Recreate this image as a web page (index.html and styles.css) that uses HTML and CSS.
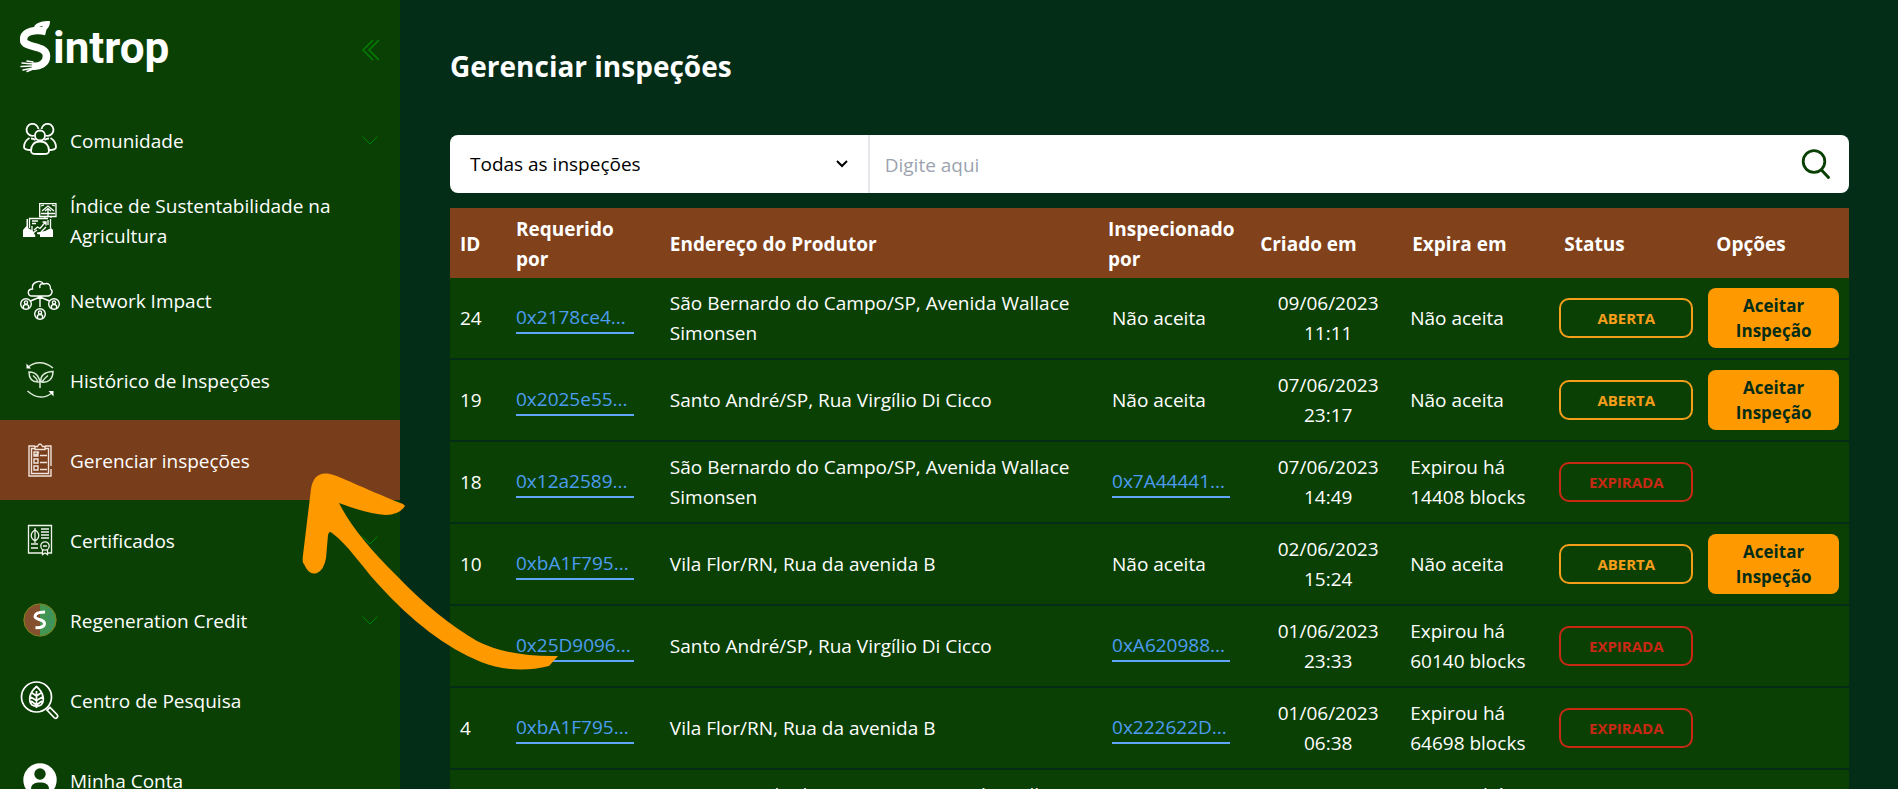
FILE: index.html
```html
<!DOCTYPE html>
<html lang="pt-BR">
<head>
<meta charset="utf-8">
<title>Sintrop – Gerenciar inspeções</title>
<link rel="stylesheet" href="styles.css">
</head>
<body>
<div class="shell">
  <aside class="sidebar">
    <div class="brand">
      <a class="logo" href="#" aria-label="Sintrop">
        <svg class="logo-mark" viewBox="0 0 32 52" width="32" height="52" aria-hidden="true">
          <path d="M26 10.500C16 8 3.500 10 3.500 18.500C3.500 28 26.500 23 26.500 35C26.500 43 19 46 12 45" fill="none" stroke="#fff" stroke-width="7.500"/>
          <path d="M14 6C16 1 23 0 30 0C30 7 26 11 18 10L23 5C20 5 17 8 14 6Z" fill="#fff"/>
          <path d="M13 41L7 40M13 43L2 42M13 45L1 45.500M13 47L3 49M13 48L7 50.500" stroke="#fff" stroke-width="1.500" stroke-linecap="round"/>
        </svg>
        <span class="logo-text">introp</span>
      </a>
      <button class="collapse" type="button" aria-label="Recolher menu">
        <svg viewBox="0 0 18 22" width="18" height="22"><path d="M11 1L1 11L11 21M17 1L7 11L17 21" fill="none" stroke="currentColor" stroke-width="1.500"/></svg>
      </button>
    </div>
    <nav class="menu">
      <a class="item" href="#">
        <svg class="icon" viewBox="0 0 40 40"><g fill="none" stroke="#fff" stroke-width="1.800" stroke-linejoin="round"><circle cx="20" cy="15.500" r="5"/><path d="M11 31C11 25 14 21.500 20 21.500S29 25 29 31C29 34 27 34 20 34S11 34 11 31Z"/><path d="M14.500 15.500A6 6 0 1 1 18.500 9M25.500 15.500A6 6 0 1 0 21.500 9M9.500 18C6 20 4 23 4 27C4 29.500 6 30 11 30M30.500 18C34 20 36 23 36 27C36 29.500 34 30 29 30M11 18.500C13 18.500 14 19 15.500 20M29 18.500C27 18.500 26 19 24.500 20"/></g></svg>
        <span class="label">Comunidade</span>
        <svg class="chevron" viewBox="0 0 16 9"><path d="M.500 .500L8 8L15.500 .500"/></svg>
      </a>
      <a class="item" href="#">
        <svg class="icon" viewBox="0 0 40 40"><g fill="none" stroke="#fff" stroke-width="1.300"><path d="M19.700 3.700H36V16.500H19.700ZM22 11L28 6L34 11M25 11L28 8.500L31 11M28 9V16M21 13.500H35M21 6L24 5M35 6L32 5M25 16V18M31 16V18M9.500 28V18.500H28M30.500 19V28M28 20V25M12 21H18M12 23.500H16M12 31V26M14 30L17.500 27L20 28.500L25.500 22M22.500 22H26V25.500M13 33L17 30M21 32L26 27"/></g><path d="M3 37V30L6.500 26V19H8V28L13 31L15.500 36L15 37ZM33 37H20V34.500L17 34V32.500L25 31L31 28L33 30Z" fill="#fff"/></svg>
        <span class="label">Índice de Sustentabilidade na Agricultura</span>
      </a>
      <a class="item" href="#">
        <svg class="icon" viewBox="0 0 40 40"><g fill="none" stroke="#fff" stroke-width="1.400"><path d="M12 16C7 16 7 9 12.500 9C11 2 21-1 23.500 4C29 2 31 6 30.500 9C34 11 31 16 28 16ZM20 8C19 5 21 3 23.500 4M20 16V27M20 17L10.500 21M20 17L29.500 21"/><circle cx="6" cy="24" r="5.300"/><circle cx="34" cy="24" r="5.300"/><circle cx="20" cy="34" r="5.300"/><circle cx="6" cy="22.500" r="1.600"/><circle cx="34" cy="22.500" r="1.600"/><circle cx="20" cy="32.500" r="1.600"/><path d="M3.500 28V25.500Q6 23.500 8.500 25.500V28M31.500 28V25.500Q34 23.500 36.500 25.500V28M17.500 38V35.500Q20 33.500 22.500 35.500V38"/></g></svg>
        <span class="label">Network Impact</span>
      </a>
      <a class="item" href="#">
        <svg class="icon" viewBox="0 0 40 40"><g fill="none" stroke="#dbe8d8" stroke-width="1.500"><path d="M8 7Q20-2 33 8M7.500 31Q20 42 32 33"/><path d="M20 28V20M20 24C20 18 17 12 9 12C9 19 13 22 18 22C17 19 15 17 13 15.500M21 22C20 15 25 12 33 11.500C33 19 28 23 22 22C24 19 26 17 28 15.500"/></g><path d="M6.500 3.500V8.500H11ZM33.500 36.500V31H28.500Z" fill="#fff"/></svg>
        <span class="label">Histórico de Inspeções</span>
      </a>
      <a class="item item-active" href="#" aria-current="page">
        <svg class="icon" viewBox="0 0 40 40"><g fill="none" stroke="#f1e4dc" stroke-width="1.400"><path d="M15 6H9V36H31V29M31 26V6H25M15 8.500H11.500V33.500H28.500V8.500H25M15 9.500V6.500H17.500Q20 1.500 22.500 6.500H25V9.500ZM14 12H18V16H14ZM14 19H18V23H14ZM14 26H18V30H14ZM20 15.500H27M20 22.500H27M20 29.500H27M15 14L16 15L19 12"/></g></svg>
        <span class="label">Gerenciar inspeções</span>
      </a>
      <a class="item" href="#">
        <svg class="icon" viewBox="0 0 40 40"><g fill="none" stroke="#eef4ec" stroke-width="1.300"><path d="M22 33H8.500V5.500H31.500V33H28M21 9H29M21 12H29M21 15H29M21 18H29M11 24H18M11 28H18M15 8V23M15 10C10 13 10 18 15 21C20 18 20 13 15 10Z"/><circle cx="25" cy="26" r="4.200"/><path d="M23 26H27M22.500 30V34.500L25 33L27.500 34.500V30"/></g></svg>
        <span class="label">Certificados</span>
        <svg class="chevron" viewBox="0 0 16 9"><path d="M.500 .500L8 8L15.500 .500"/></svg>
      </a>
      <a class="item" href="#">
        <svg class="icon" viewBox="0 0 40 40"><circle cx="20" cy="20" r="16" fill="#439552"/><path d="M20 4A16 16 0 0 0 20 36Z" fill="#84502d"/><path d="M29 9L31 14L28 17L32 22L29 29" fill="none" stroke="#348b83" stroke-width="1.500" stroke-dasharray="2 2"/><circle cx="20" cy="20" r="16.200" fill="none" stroke="#83841c"/><path d="M25 12C19 12 15 13 15 16.500C15 20 24.500 19 24.500 23.500C24.500 27 20 28 15.500 27.500" fill="none" stroke="#fff" stroke-width="3"/></svg>
        <span class="label">Regeneration Credit</span>
        <svg class="chevron" viewBox="0 0 16 9"><path d="M.500 .500L8 8L15.500 .500"/></svg>
      </a>
      <a class="item" href="#">
        <svg class="icon" viewBox="0 0 40 40"><g fill="none" stroke="#fff" stroke-width="1.700"><circle cx="16.500" cy="17" r="15"/><path d="M16.500 28V11M16.500 6.500C9 13 8 21 12 25Q16.500 27.500 21 25C25 21 24 13 16.500 6.500ZM16.500 16L12 13M16.500 16L21 13M16.500 20.500L10.500 17M16.500 20.500L22.500 17M16.500 25L11 21M16.500 25L22 21"/><path d="M27 30L30 27.500L37 34.500C39 37 36 39.500 34 37.500Z"/></g></svg>
        <span class="label">Centro de Pesquisa</span>
      </a>
      <a class="item" href="#">
        <svg class="icon" viewBox="0 0 40 40"><circle cx="20" cy="20" r="16.700" fill="#fff"/><circle cx="20" cy="14" r="5.700" fill="#0b4005"/><path d="M11 29C11 24 15 22.500 20 22.500S29 24 29 29Q20 36 11 29Z" fill="#0b4005"/></svg>
        <span class="label">Minha Conta</span>
      </a>
    </nav>
  </aside>

  <main class="main">
    <h1 class="title">Gerenciar inspeções</h1>
    <form class="search">
      <select class="filter" aria-label="Filtrar inspeções"><option>Todas as inspeções</option></select>
      <input class="query" type="text" placeholder="Digite aqui" aria-label="Pesquisar">
      <button class="search-button" type="button" aria-label="Buscar">
        <svg viewBox="0 0 30 32" width="30" height="32"><circle cx="13" cy="13.500" r="10.800" fill="none" stroke="currentColor" stroke-width="2.800"/><path d="M20.500 22L27.500 29.500" stroke="currentColor" stroke-width="3" stroke-linecap="round"/></svg>
      </button>
    </form>
    <table class="table">
      <colgroup><col class="c-id"><col class="c-by"><col class="c-address"><col class="c-mid"><col class="c-mid"><col class="c-mid"><col class="c-mid"><col class="c-options"></colgroup>
      <thead>
        <tr><th>ID</th><th>Requerido por</th><th>Endereço do Produtor</th><th>Inspecionado por</th><th>Criado em</th><th>Expira em</th><th>Status</th><th>Opções</th></tr>
      </thead>
      <tbody>
        <tr><td>24</td><td><a class="wallet" href="#">0x2178ce4...</a></td><td>São Bernardo do Campo/SP, Avenida Wallace Simonsen</td><td class="inspector">Não aceita</td><td class="created">09/06/2023 11:11</td><td class="expires">Não aceita</td><td class="state"><span class="pill open">ABERTA</span></td><td class="options"><button class="accept" type="button">Aceitar Inspeção</button></td></tr>
        <tr><td>19</td><td><a class="wallet" href="#">0x2025e55...</a></td><td>Santo André/SP, Rua Virgílio Di Cicco</td><td class="inspector">Não aceita</td><td class="created">07/06/2023 23:17</td><td class="expires">Não aceita</td><td class="state"><span class="pill open">ABERTA</span></td><td class="options"><button class="accept" type="button">Aceitar Inspeção</button></td></tr>
        <tr><td>18</td><td><a class="wallet" href="#">0x12a2589...</a></td><td>São Bernardo do Campo/SP, Avenida Wallace Simonsen</td><td class="inspector"><a class="wallet" href="#">0x7A44441...</a></td><td class="created">07/06/2023 14:49</td><td class="expires">Expirou há 14408 blocks</td><td class="state"><span class="pill expired">EXPIRADA</span></td><td class="options"></td></tr>
        <tr><td>10</td><td><a class="wallet" href="#">0xbA1F795...</a></td><td>Vila Flor/RN, Rua da avenida B</td><td class="inspector">Não aceita</td><td class="created">02/06/2023 15:24</td><td class="expires">Não aceita</td><td class="state"><span class="pill open">ABERTA</span></td><td class="options"><button class="accept" type="button">Aceitar Inspeção</button></td></tr>
        <tr><td></td><td><a class="wallet" href="#">0x25D9096...</a></td><td>Santo André/SP, Rua Virgílio Di Cicco</td><td class="inspector"><a class="wallet" href="#">0xA620988...</a></td><td class="created">01/06/2023 23:33</td><td class="expires">Expirou há 60140 blocks</td><td class="state"><span class="pill expired">EXPIRADA</span></td><td class="options"></td></tr>
        <tr><td>4</td><td><a class="wallet" href="#">0xbA1F795...</a></td><td>Vila Flor/RN, Rua da avenida B</td><td class="inspector"><a class="wallet" href="#">0x222622D...</a></td><td class="created">01/06/2023 06:38</td><td class="expires">Expirou há 64698 blocks</td><td class="state"><span class="pill expired">EXPIRADA</span></td><td class="options"></td></tr>
        <tr><td></td><td></td><td>São Bernardo do Campo/SP, Avenida Wallace Simonsen</td><td class="inspector"></td><td class="created"></td><td class="expires">Expirou há 64698 blocks</td><td class="state"></td><td class="options"></td></tr>
      </tbody>
    </table>
  </main>
  <svg class="pointer" viewBox="0 0 260 202" aria-hidden="true"><path d="M11 16C13 4 19 -1 30 1C40 3 60 14 103 31L105 33Q99 42 86 42Q68 41 39 30Q55 62 97 103Q136 144 177 168Q208 184 258 183L249 193C225 199 202 197 181 189Q129 168 77 110C60 91 48 72 32 60Q29 57 28 62L26 85Q24 97 17 100Q9 103 4 91Q2 90 3 82Z" fill="#ff9900"/></svg>
</div>
</body>
</html>
```
FILE: styles.css
```css
* { box-sizing: border-box; }

body {
  margin: 0;
  background: #042d18;
  color: #fff;
  font-family: "Open Sans", "Segoe UI", sans-serif;
  font-size: 19px;
  line-height: 30px;
}

button, input, select { font: inherit; }
a { color: inherit; text-decoration: none; }

.shell {
  position: relative;
  display: flex;
  height: 100vh;
  overflow: hidden;
}

.sidebar {
  flex: 0 0 400px;
  background: #0b4005;
  overflow: hidden;
}

.brand {
  display: flex;
  justify-content: space-between;
  align-items: center;
  height: 100px;
  padding: 0 20px;
}

.logo {
  display: flex;
  align-items: center;
  padding-bottom: 6px;
}
.logo-mark { flex: none; }
.logo-text {
  padding: 2px 0 0 1px;
  font-family: Roboto, sans-serif;
  font-size: 44px;
  font-weight: 700;
}

.collapse {
  display: flex;
  padding: 0;
  border: 0;
  background: none;
  color: #008000;
}

.item {
  display: flex;
  align-items: center;
  gap: 10px;
  height: 80px;
  padding: 0 20px;
}
.item-active { background: #783d1a; }
.label { flex: 1; padding-top: 2px; }
.icon { flex: none; width: 40px; height: 40px; }
.chevron {
  flex: none;
  width: 16px;
  height: 9px;
  margin-right: 2px;
  fill: none;
  stroke: #008000;
}

.main {
  flex: 1;
  min-width: 0;
  padding: 46px 49px 0 50px;
}

.title {
  margin: 0 0 49px;
  font-size: 28px;
  font-weight: 700;
  line-height: 40px;
}

.search {
  display: flex;
  height: 58px;
  margin-bottom: 15px;
  border-radius: 8px;
  overflow: hidden;
  background: #fff;
}

.filter {
  width: 30%;
  padding: 0 20px;
  border: 0;
  border-right: 2px solid #e5e7eb;
  appearance: none;
  background: url("data:image/svg+xml,%3Csvg xmlns='http://www.w3.org/2000/svg' viewBox='0 0 12 8'%3E%3Cpath d='M1 1l5 5 5-5' fill='none' stroke='%23000' stroke-width='2'/%3E%3C/svg%3E") right 20px center / 12px 8px no-repeat;
  color: #000;
}

.query {
  flex: 1;
  min-width: 0;
  padding: 2px 15px 0;
  border: 0;
  outline: 0;
  color: #000;
}
.query::placeholder { color: #9ca3af; }

.search-button {
  display: flex;
  align-items: center;
  padding: 0 18px;
  border: 0;
  background: none;
  color: #0b4005;
}

.table {
  width: 100%;
  table-layout: fixed;
  border-collapse: separate;
  border-spacing: 0;
}
.c-id { width: 4%; }
.c-by { width: 11%; }
.c-mid { width: 10.87%; }
.c-options { width: 10.2%; }

th {
  height: 70px;
  padding: 2px 10px 0;
  background: #80411b;
  font-weight: 700;
  text-align: left;
}

td {
  height: 82px;
  padding: 0 10px;
  border-bottom: 2px solid #042d18;
  background: #0b4005;
}
.inspector { padding: 0 14px; }
.created { padding: 0 20px 0 24px; text-align: center; }
.expires { padding: 0 8px; }
.state { padding: 0 13px 0 5px; }
.options { padding: 0 10px 0 2px; }

.wallet {
  display: block;
  max-width: 118px;
  border-bottom: 2px solid #60a5fa;
  color: #4b9cf0;
}

.pill {
  display: block;
  border: 2px solid;
  border-radius: 10px;
  font-size: 15px;
  font-weight: 700;
  line-height: 36px;
  text-align: center;
}
.open { color: #f59e1b; }
.expired { color: #c82814; }

.accept {
  display: block;
  width: 100%;
  padding: 5px 20px;
  border: 0;
  border-radius: 8px;
  background: #ff9900;
  color: #042d18;
  font-size: 17px;
  font-weight: 700;
  line-height: 25px;
}

.pointer {
  position: absolute;
  left: 300px;
  top: 473px;
  width: 260px;
  height: 202px;
  pointer-events: none;
}
```
